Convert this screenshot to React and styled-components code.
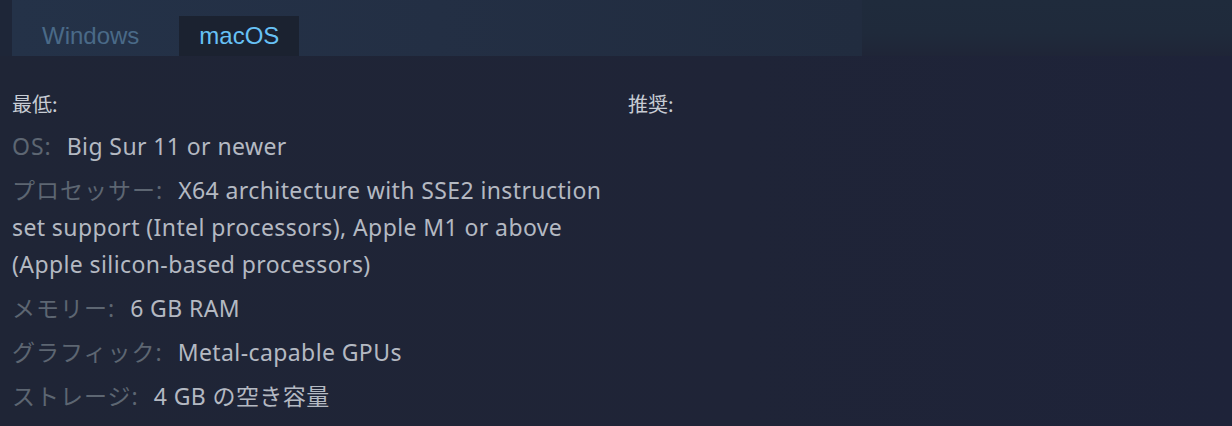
import React from "react";
import styled, { createGlobalStyle } from "styled-components";

const GlobalStyle = createGlobalStyle`
  html, body {
    margin: 0;
    padding: 0;
    background: #1e2437;
  }
  body {
    width: 1232px;
    height: 426px;
    overflow: hidden;
  }
`;

const platforms = ["Windows", "macOS"];

const minimum = [
  { label: "OS:", value: "Big Sur 11 or newer" },
  {
    label: "プロセッサー:",
    value:
      "X64 architecture with SSE2 instruction set support (Intel processors), Apple M1 or above (Apple silicon-based processors)",
  },
  { label: "メモリー:", value: "6 GB RAM" },
  { label: "グラフィック:", value: "Metal-capable GPUs" },
  { label: "ストレージ:", value: "4 GB の空き容量" },
];

const SysReq = () => {
  return (
    <Page>
      <GlobalStyle />
      <TopBar>
        <Gutter />
        <TabBar>
          {platforms.map((item) => (
            <Tab key={item} active={item === "macOS"}>
              {item}
            </Tab>
          ))}
        </TabBar>
        <TopFill />
      </TopBar>
      <Columns>
        <Column>
          <Heading>最低:</Heading>
          <ReqList>
            {minimum.map((item) => (
              <ReqItem key={item.label}>
                <Label>{item.label}</Label>
                {item.value}
              </ReqItem>
            ))}
          </ReqList>
        </Column>
        <RightColumn>
          <Heading>推奨:</Heading>
        </RightColumn>
      </Columns>
    </Page>
  );
};

export default SysReq;

const Page = styled.div`
  width: 1232px;
  height: 426px;
  background: linear-gradient(to right, #1f2536 0%, #1f2437 60%, #1e2339 100%);
`;

const TopBar = styled.div`
  display: flex;
  height: 56px;
`;

const Gutter = styled.div`
  width: 12px;
  background: #1e2638;
`;

const TabBar = styled.div`
  width: 850px;
  display: flex;
  align-items: flex-end;
  gap: 20px;
  padding-left: 10px;
  box-sizing: border-box;
  background: linear-gradient(to right, #243248 0%, #232f44 50%, #212c3f 100%);
`;

const TopFill = styled.div`
  flex: 1;
  background: linear-gradient(to bottom, #1f2b3c 0%, #1f2a3b 60%, #1f2537 100%);
`;

const Tab = styled.div`
  height: 40px;
  display: flex;
  align-items: center;
  padding: 0 20px;
  font-family: "Liberation Sans", Arial, sans-serif;
  font-size: 24px;
  color: ${(p) => (p.active ? "#67c1f5" : "#4a6a88")};
  background: ${(p) => (p.active ? "#1b2230" : "transparent")};
  cursor: pointer;
`;

const Columns = styled.div`
  display: flex;
  padding: 0 12px;
`;

const Column = styled.div`
  width: 604px;
`;

const RightColumn = styled.div`
  margin-left: 12px;
  flex: 1;
`;

const Heading = styled.div`
  margin-top: 36px;
  font-family: "Noto Sans CJK JP", "Noto Sans", sans-serif;
  font-size: 20px;
  line-height: 24px;
  color: #c7ccd4;
`;

const ReqList = styled.ul`
  list-style: none;
  margin: 12px 0 0;
  padding: 0;
`;

const ReqItem = styled.li`
  font-family: "Noto Sans", "Noto Sans CJK JP", sans-serif;
  font-size: 23px;
  line-height: 37px;
  letter-spacing: 0.4px;
  color: #b4b9c2;
  margin-bottom: 7px;
`;

const Label = styled.span`
  color: #5d6672;
  letter-spacing: 1px;
  margin-right: 15px;
`;
